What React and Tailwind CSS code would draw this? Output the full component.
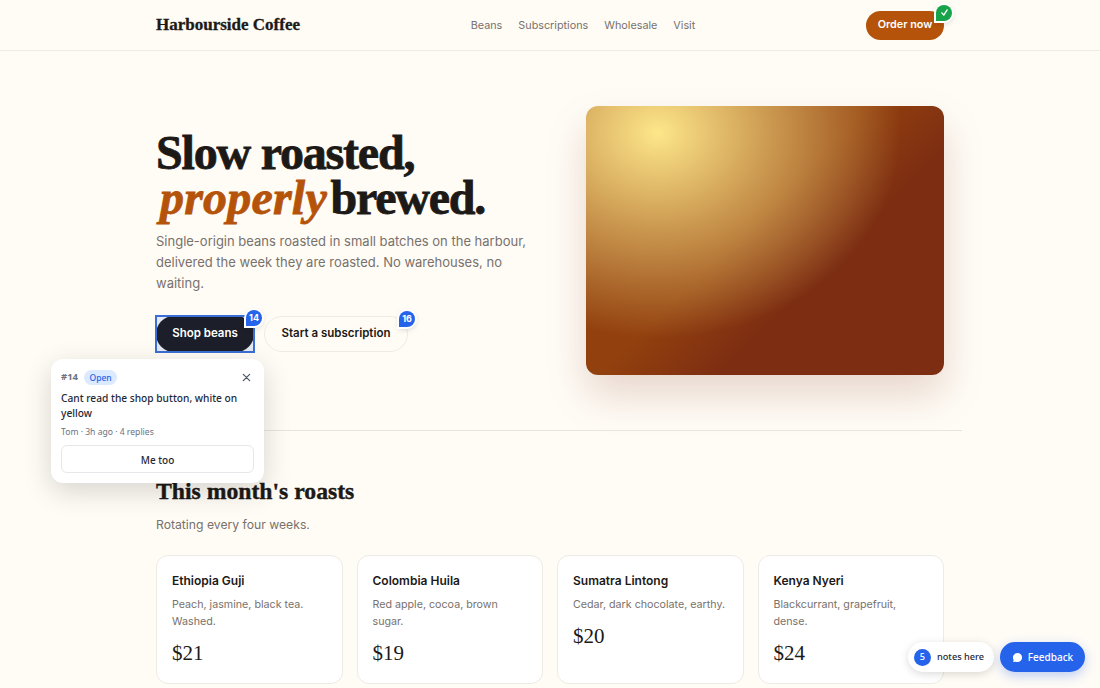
const sans = "font-['Inter',sans-serif]";
const serif = "font-['Liberation_Serif',serif]";
const ui = "font-['Noto_Sans',sans-serif]";

const roasts = [
  { name: "Ethiopia Guji", desc: "Peach, jasmine, black tea. Washed.", price: "$21" },
  { name: "Colombia Huila", desc: "Red apple, cocoa, brown sugar.", price: "$19" },
  { name: "Sumatra Lintong", desc: "Cedar, dark chocolate, earthy.", price: "$20" },
  { name: "Kenya Nyeri", desc: "Blackcurrant, grapefruit, dense.", price: "$24" },
];

function Pin({ children, className }) {
  return (
    <span className={`absolute -top-[6px] -right-[8px] flex items-center justify-center w-[16px] h-[16px] rounded-full rounded-bl-[2px] text-white text-[9px] font-bold ring-2 ring-white shadow-[0_2px_6px_rgba(0,0,0,0.2)] ${className}`}>
      {children}
    </span>
  );
}

export default function App() {
  return (
    <div className={`relative h-screen overflow-hidden bg-[#fffcf6] text-[#1c1917] ${sans}`}>
      <header className="h-[51px] border-b border-[#eeebe5] flex justify-center">
        <div className="w-[788px] flex items-center justify-between">
          <div className={`w-[144px] whitespace-nowrap text-[17px] font-bold tracking-[0px] [-webkit-text-stroke:0.3px] ${serif}`}>Harbourside Coffee</div>
          <nav className="flex gap-4 text-[10.8px] leading-[16px] mt-[2px] text-[#78716c]">
            <span>Beans</span>
            <span>Subscriptions</span>
            <span>Wholesale</span>
            <span>Visit</span>
          </nav>
          <div className="relative w-[78px] h-[29px] rounded-full bg-[#b45309] text-white text-[10.8px] font-semibold flex items-center justify-center">
            Order now
            <Pin className="bg-[#16a34a]">
              <svg width="9" height="9" viewBox="0 0 12 12" fill="none" stroke="white" strokeWidth="1.8" strokeLinecap="round" strokeLinejoin="round"><path d="M2.5 6.5 5 9.5 9.5 2.5" /></svg>
            </Pin>
          </div>
        </div>
      </header>

      <main className="flex flex-col items-center">
        <section className="w-[788px] flex justify-between pt-[55px] h-[379px]">
          <div className="w-[375px] pt-[24px]">
            <h1 className={`text-[48px] leading-[45px] font-bold tracking-[-1.2px] [-webkit-text-stroke:0.8px] ${serif}`}>
              Slow roasted,<br />
              <em className="text-[#b45309] tracking-[0.2px] pl-[4px] pr-[3.5px]">properly</em>brewed.
            </h1>
            <p className="mt-[11px] text-[13px] leading-[21px] text-[#78716c]">
              Single-origin beans roasted in small batches on the harbour, delivered the week they are roasted. No warehouses, no waiting.
            </p>
            <div className="mt-[22px] flex gap-[10px]">
              <div className="relative w-[98px] h-[36px] outline-2 outline-[#3b6fd4] -outline-offset-1 bg-[#e3e8f2]">
                <div className="h-full rounded-full bg-[#1c1f2a] text-white text-[11.5px] font-semibold flex items-center justify-center">Shop beans</div>
                <Pin className="bg-[#2563eb]">14</Pin>
              </div>
              <div className="relative w-[144px] h-[36px] rounded-full border border-[#eeebe5] text-[11.5px] font-semibold flex items-center justify-center">
                Start a subscription
                <Pin className="bg-[#2563eb]">16</Pin>
              </div>
            </div>
          </div>
          <div className="w-[358px] h-[269px] rounded-[12px] bg-[radial-gradient(ellipse_at_20%_10%,#fde68a,transparent_60%),linear-gradient(135deg,#92400e_45%,#7c2d12_65%)] shadow-[0_20px_40px_rgba(124,45,18,0.18)]" />
        </section>

        <div className="w-[824px] h-px bg-[#e7e5e0]" />

        <section className="w-[788px] pt-[46px]">
          <h2 className={`text-[23.7px] leading-[28px] font-bold [-webkit-text-stroke:0.4px] ${serif}`}>This month's roasts</h2>
          <p className="mt-[11px] text-[12.2px] leading-[18px] text-[#78716c]">Rotating every four weeks.</p>
          <div className="mt-[21px] grid grid-cols-4 gap-[14px]">
            {roasts.map((r) => (
              <div key={r.name} className="rounded-[12px] border border-[#eeebe5] bg-white px-[15px] pt-[16px] h-[129px]">
                <div className="text-[12px] leading-[18px] font-semibold">{r.name}</div>
                <p className="mt-[6px] text-[10.7px] leading-[17px] text-[#78716c]">{r.desc}</p>
                <div className={`mt-[9px] text-[21px] leading-[28px] ${serif}`}>{r.price}</div>
              </div>
            ))}
          </div>
        </section>
      </main>

      <div className={`absolute left-[51px] top-[359px] w-[213px] h-[124px] rounded-[12px] bg-white shadow-[0_8px_28px_rgba(0,0,0,0.16)] p-[10px] ${ui}`}>
        <div className="flex items-center gap-[6px] h-[16px]">
          <span className="text-[9.5px] font-bold text-[#6b7280]">#14</span>
          <span className="rounded-full bg-[#dbeafe] text-[#2563eb] text-[8.5px] font-medium px-[5.5px] h-[15px] leading-[15px]">Open</span>
          <svg className="ml-auto mr-[3px]" width="9" height="9" viewBox="0 0 10 10" fill="none" stroke="#4b5563" strokeWidth="1.4" strokeLinecap="round"><path d="M1.5 1.5 8.5 8.5M8.5 1.5 1.5 8.5" /></svg>
        </div>
        <p className="mt-[6px] text-[10.2px] leading-[15px] font-medium text-[#1f2937]">Cant read the shop button, white on yellow</p>
        <p className="mt-[5px] text-[8.6px] leading-[12px] text-[#6b7280]">Tom · 3h ago · 4 replies</p>
        <div className="mt-[7px] h-[28px] pt-[2px] rounded-[6px] border border-[#e5e7eb] text-[10px] font-medium text-[#1f2937] flex items-center justify-center">Me too</div>
      </div>

      <div className={`absolute right-[15px] top-[642px] flex gap-[6px] ${ui}`}>
        <div className="h-[30px] w-[86px] rounded-full bg-white shadow-[0_2px_8px_rgba(0,0,0,0.15)] flex items-center pl-[6px] gap-[6px] text-[9.2px] font-medium text-[#1f2937]">
          <span className="w-[17px] h-[17px] rounded-full bg-[#2563eb] text-white flex items-center justify-center">5</span>
          notes here
        </div>
        <div className="h-[30px] w-[85px] rounded-full bg-[#2563eb] shadow-[0_4px_12px_rgba(37,99,235,0.3)] flex items-center justify-center gap-[5px] text-[10px] font-medium text-white">
          <svg width="11" height="11" viewBox="0 0 12 12" fill="white"><path d="M6 1a5 5 0 0 1 0 10c-.8 0-1.6-.2-2.3-.5L1.2 11l.6-2.4A5 5 0 0 1 6 1z" /></svg>
          Feedback
        </div>
      </div>
    </div>
  );
}
